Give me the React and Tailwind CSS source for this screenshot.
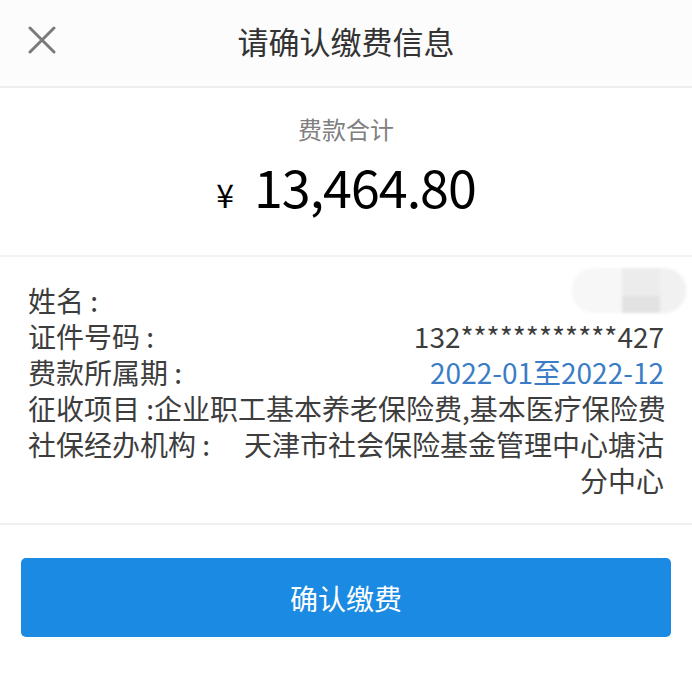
import React from "react";

const rows = [
  { label: "证件号码 :", value: "132************427" },
  { label: "费款所属期 :", value: "2022-01至2022-12", blue: true },
];

export default function App() {
  return (
    <div
      className="min-h-[695px] w-full bg-white text-[#333]"
      style={{ fontFamily: '"Noto Sans CJK SC", "Noto Sans", sans-serif' }}
    >
      {/* header */}
      <div className="grid h-[86px] grid-cols-[100px_1fr_100px] items-center bg-[#fcfcfc] pb-[6px]">
        <div className="pl-[28px]">
          <svg width="28" height="28" viewBox="0 0 28 28" fill="none" stroke="#7a7a7a" strokeWidth="3" strokeLinecap="round">
            <path d="M2 2l24 24M26 2L2 26" />
          </svg>
        </div>
        <h1 className="text-center text-[31px] leading-none text-[#333]">请确认缴费信息</h1>
        <div />
      </div>
      <div className="h-[2px] bg-[#eeeeee]" />

      {/* total */}
      <div className="flex h-[167px] flex-col items-center pt-[27px]">
        <p className="text-[24px] leading-[28px] text-[#808080]">费款合计</p>
        <div className="mt-[14px] flex items-baseline text-black">
          <span className="mr-[20px] text-[32px] leading-none">¥</span>
          <span
            className="text-[52px] leading-[58px] tracking-[-1px]"
            style={{ fontFamily: '"Noto Sans CJK SC", sans-serif' }}
          >
            13,464.80
          </span>
        </div>
      </div>
      <div className="h-[2px] bg-[#f2f2f2]" />

      {/* info */}
      <div className="px-[28px] pb-[25px] pt-[25px] text-[28px] leading-[36px] text-[#3d3d3d]">
        <div className="relative flex justify-between">
          <span>姓名 :</span>
          <div className="absolute right-[-22px] top-[-14px] flex h-[45px] w-[114px] overflow-hidden rounded-[22px] bg-[#f3f3f3] blur-[1.5px]">
            <div className="w-[50px] bg-[#f7f7f7]" />
            <div className="flex w-[38px] flex-col">
              <div className="h-[28px] bg-[#ececec]" />
              <div className="flex-1 bg-[#e2e2e2]" />
            </div>
            <div className="flex-1 bg-[#f1f1f1]" />
          </div>
        </div>
        {rows.map((r) => (
          <div key={r.label} className="flex justify-between">
            <span>{r.label}</span>
            <span className={r.blue ? "text-[#3a7dc6]" : ""}>{r.value}</span>
          </div>
        ))}
        <div className="whitespace-nowrap">征收项目 :企业职工基本养老保险费,基本医疗保险费</div>
        <div className="flex">
          <span className="shrink-0">社保经办机构 :</span>
          <span className="ml-[30px] flex-1 text-right">天津市社会保险基金管理中心塘沽分中心</span>
        </div>
      </div>
      <div className="h-[2px] bg-[#f0f0f0]" />

      {/* button */}
      <div className="px-[21px] pt-[33px]">
        <button className="flex h-[79px] w-full items-center justify-center rounded-[5px] bg-[#1b8ae3] text-[28px] text-white">
          确认缴费
        </button>
      </div>
    </div>
  );
}
